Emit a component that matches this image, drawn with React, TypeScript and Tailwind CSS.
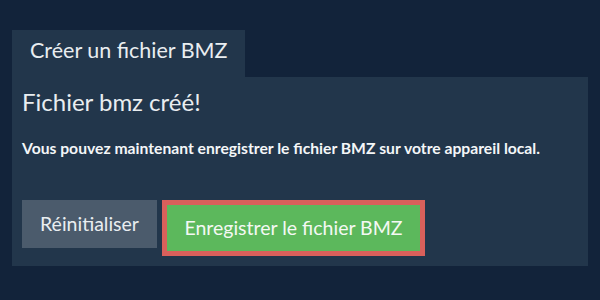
import React from "react";

export default function App() {
  return (
    <div
      className="w-[600px] h-[300px] bg-[#12233a] pt-[30px] px-[12px] text-white"
      style={{ fontFamily: "Lato, 'Open Sans', sans-serif" }}
    >
      <div className="flex">
        <div className="w-[233px] h-[47px] bg-[#22364b] pt-[7px] pl-[18px] text-[21.5px] font-normal text-[#e9edf0] leading-[26px]">
          Créer un fichier BMZ
        </div>
      </div>
      <div className="w-[576px] h-[189px] bg-[#22364b] pl-[10px] pt-[10px]">
        <h1 className="text-[24px] leading-[30px] text-[#e9edf0] font-normal">Fichier bmz créé!</h1>
        <p className="mt-[21px] text-[15.7px] leading-[20px] font-bold text-[#f4f6f8]">
          Vous pouvez maintenant enregistrer le fichier BMZ sur votre appareil local.
        </p>
        <div className="mt-[42px] flex items-start gap-[5px]">
          <button className="w-[135px] h-[48px] bg-[#4b5b6c] text-[19.5px] font-normal text-[#e9edf0] flex items-center justify-center">
            Réinitialiser
          </button>
          <div className="border-[5px] border-[#d9605b]">
            <button className="w-[253px] h-[46px] bg-[#5cb85c] text-[19.5px] font-normal text-[#f4f8f4] flex items-center justify-center">
              Enregistrer le fichier BMZ
            </button>
          </div>
        </div>
      </div>
    </div>
  );
}
